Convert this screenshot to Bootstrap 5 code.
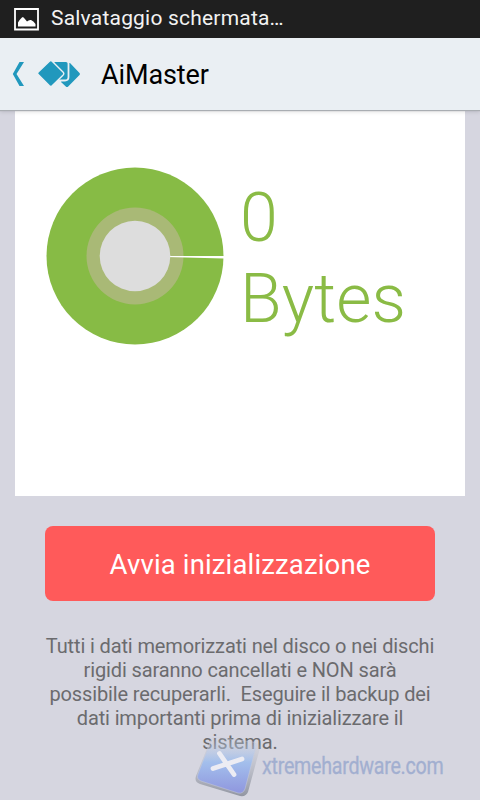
<!DOCTYPE html>
<html lang="it">
<head>
<meta charset="utf-8">
<meta name="viewport" content="width=device-width, initial-scale=1">
<title>AiMaster</title>
<link href="https://cdn.jsdelivr.net/npm/bootstrap@5.3.0/dist/css/bootstrap.min.css" rel="stylesheet">
<style>
body { background: #d6d6e0; font-family: Roboto, "Liberation Sans", sans-serif; width: 480px; height: 800px; }
.statusbar { height: 38px; background: #1f1f1f; color: #f2f2f2; font-size: 21px; padding-left: 14px; z-index: 2; }
.status-text { margin-left: 12px; letter-spacing: .2px; line-height: 36px; margin-top: -2px; }
.appbar { height: 72px; background: #eaeff3; box-shadow: 0 1px 1px #a9adb2, 0 2px 4px rgba(0,0,0,.12); padding: 0 0 0 12px; z-index: 1; }
.app-title { font-size: 27px; line-height: 36px; color: #000; margin-left: 20px; letter-spacing: -.1px; padding-top: 1px; }
.panel { margin: 0 15px; height: 386px; padding: 57px 0 0 31px; }
.amount { font-size: 68px; font-weight: 300; line-height: 81px; color: #8abb45; margin: 11px 0 0 16px; letter-spacing: .1px; }
.action-area { margin: 30px 45px 0; }
.btn-start { --bs-btn-color: #fff; --bs-btn-bg: #ff5a5a; --bs-btn-hover-bg: #f04e4e; --bs-btn-hover-color: #fff; --bs-btn-border-width: 0; --bs-btn-border-radius: 8px; --bs-btn-font-size: 27.500px; height: 75px; letter-spacing: .15px; padding-top: 8px; }
.notice { color: #6b6b6e; font-size: 20px; line-height: 24px; margin-top: 33px; letter-spacing: -.13px; }
.notice span { white-space: pre; }
.brandmark { left: 192px; top: 732px; }
.brandmark-name { color: #a2afd0; font-size: 23.500px; line-height: 28px; letter-spacing: -.3px; margin: -1px 0 0 1px; -webkit-text-stroke: .3px #a2afd0; transform: scaleX(.836); transform-origin: left center; }
</style>
</head>
<body class="position-relative overflow-hidden d-flex flex-column">
<header class="statusbar position-relative d-flex align-items-center flex-shrink-0">
  <svg width="25" height="23" viewBox="0 0 25 23"><path d="M1 1h23v20.500H1z" fill="none" stroke="#fff" stroke-width="1.800"/><path d="M4 18.500v-4q3-5 5-5.500 1.500 1 4 4.500 2-2 4-1.500 2.500 1 4.500 4v2.500z" fill="#fff"/></svg>
  <span class="status-text">Salvataggio schermata…</span>
</header>
<nav class="navbar appbar position-relative flex-nowrap justify-content-start flex-shrink-0">
  <svg width="13" height="26" viewBox="0 0 13 26"><path d="M7.500 1H12L4.500 13 12 25H7.500L.8 13z" fill="#2198bd"/></svg>
  <svg width="43" height="28" viewBox="0 0 43 28" style="margin-left:13px" fill="#2198bd">
    <path d="M28.500 3H32L41.500 13q1 1 0 2L30.200 26.500q-1.200 1-2.400 0L23 22z"/>
    <path d="M15 1H28q2.500 0 2.500 2.500V17q0 3.500-3.500 3.500H20z" stroke="#eaeff3" stroke-width="1.800"/>
    <path d="M11.400 1.200q1.400-1.300 2.800 0l11 11.100q1.200 1.300 0 2.600L14.200 25.800q-1.400 1.300-2.800 0L.2 14.600q-1.200-1.300 0-2.600z" stroke="#eaeff3" stroke-width="1.400"/>
  </svg>
  <span class="app-title">AiMaster</span>
</nav>
<main class="d-flex flex-column">
  <section class="panel bg-white d-flex align-items-start">
    <svg width="178" height="178" viewBox="0 0 178 178">
      <circle cx="89" cy="89" r="88.500" fill="#87bb45"/>
      <circle cx="89" cy="89" r="48.500" fill="#a9b976"/>
      <path d="M120 89h58v2.400L120 90z" fill="#fff"/>
      <circle cx="89" cy="89" r="35.300" fill="#ddd"/>
    </svg>
    <div class="amount">0<br>Bytes</div>
  </section>
  <div class="action-area">
    <button type="button" class="btn btn-start w-100">Avvia inizializzazione</button>
  </div>
  <p class="notice text-center mb-0"><span>Tutti i dati memorizzati nel disco o nei dischi</span><br><span>rigidi saranno cancellati e NON sarà</span><br><span>possibile recuperarli.  Eseguire il backup dei</span><br><span>dati importanti prima di inizializzare il</span><br><span>sistema.</span></p>
</main>
<div class="brandmark position-absolute d-flex align-items-center">
  <svg width="69" height="68" viewBox="0 0 69 68">
    <defs><linearGradient id="tile" x1="0" y1="0" x2="0" y2="1"><stop offset="0" stop-color="#d3dcea" stop-opacity=".1"/><stop offset=".22" stop-color="#b9cdf0" stop-opacity=".4"/><stop offset=".45" stop-color="#a3bfec"/><stop offset="1" stop-color="#8f96de"/></linearGradient>
    <linearGradient id="rim" x1="0" y1="0" x2="0" y2="1"><stop offset="0" stop-color="#b8bdc7" stop-opacity="0"/><stop offset=".3" stop-color="#b0b4be" stop-opacity=".3"/><stop offset="1" stop-color="#9296a2"/></linearGradient></defs>
    <path d="M23 5 64 11q5 1 4 5L56 60q-2 5-8 4L8 52q-6-2-4-8L18 9q1-4 5-4z" fill="url(#rim)"/>
    <path d="M23 5 61 10q4 1 3 5L53 57q-2 5-7 4L9 49q-5-2-3-7L19 8q1-3 4-3z" fill="url(#tile)" stroke="#c8cddd" stroke-opacity=".6" stroke-width=".8"/>
    <path d="M27.500 21.500 42 42.500M21 36.500 50 27" fill="none" stroke="#ececf3" stroke-width="4.800" stroke-linecap="round"/>
  </svg>
  <span class="brandmark-name text-nowrap">xtremehardware.com</span>
</div>
<script src="https://cdn.jsdelivr.net/npm/bootstrap@5.3.0/dist/js/bootstrap.bundle.min.js"></script>
</body>
</html>
